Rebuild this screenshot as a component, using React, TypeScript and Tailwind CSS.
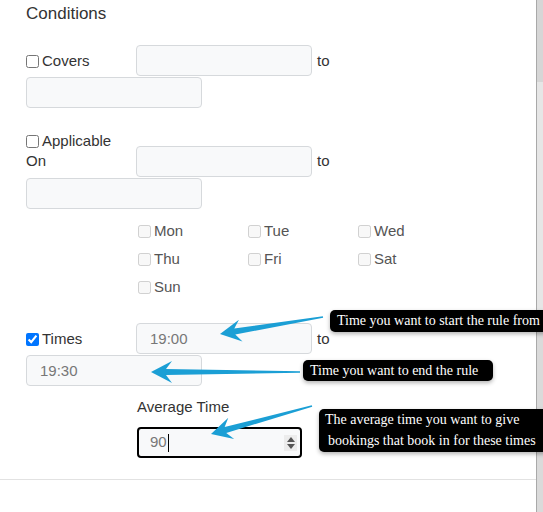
import React from "react";

const field =
  "h-[31px] rounded-[4px] border border-[#d6d9dc] bg-[#f8f9fa] px-[13px] text-[15px] text-[#777] outline-none";

type ArrowProps = { tip: [number, number]; tail: [number, number] };

// tapered annotation arrow, tip at local origin, tail along +x
function Arrow({ tip, tail }: ArrowProps) {
  const dx = tail[0] - tip[0];
  const dy = tail[1] - tip[1];
  const len = Math.sqrt(dx * dx + dy * dy);
  const angle = (Math.atan2(dy, dx) * 180) / Math.PI;
  const d = `M0 0 L21 -11 L15 -3 L${len} -0.8 L${len} 0.8 L15 3 L21 11 Z`;
  return (
    <g transform={`translate(${tip[0]} ${tip[1]}) rotate(${angle})`}>
      <path d={d} fill="#1b9fd5" />
    </g>
  );
}

function Day({ name }: { name: string }) {
  return (
    <label className="flex h-[28px] items-center gap-[3px] text-[#555]">
      <input type="checkbox" disabled className="m-0 h-[13px] w-[13px]" />
      {name}
    </label>
  );
}

export default function App() {
  return (
    <div
      className="relative flex h-[512px] w-[543px] overflow-hidden bg-white text-[15px] text-[#333]"
      style={{ fontFamily: '"Liberation Sans", Arial, sans-serif' }}
    >
      {/* Modal body */}
      <div className="w-[537px] shrink-0 border-r border-[#a9a9a9]">
        <div className="pl-[26px] pt-[2px]">
          <h2 className="text-[17px] leading-[24px] text-[#333]">Conditions</h2>

          {/* Covers */}
          <div className="mt-[19px] flex items-center">
            <label className="flex w-[110px] items-center gap-[3px] pt-[2px]">
              <input type="checkbox" className="m-0 h-[13px] w-[13px]" />
              Covers
            </label>
            <input readOnly className={`${field} w-[176px]`} />
            <span className="ml-[5px] pt-[2px]">to</span>
          </div>
          <input readOnly className={`${field} mt-[1px] block w-[176px]`} />

          {/* Applicable On */}
          <div className="mt-[23px] flex items-end">
            <div className="mb-[6px] w-[110px] leading-[20px]">
              <label className="flex items-center gap-[3px]">
                <input type="checkbox" className="m-0 h-[13px] w-[13px]" />
                Applicable
              </label>
              <div>On</div>
            </div>
            <input readOnly className={`${field} w-[176px]`} />
            <span className="mb-[6px] ml-[5px] leading-[20px]">to</span>
          </div>
          <input readOnly className={`${field} mt-[1px] block w-[176px]`} />

          <div className="ml-[112px] mt-[8px] grid grid-cols-[110px_110px_auto]">
            {["Mon", "Tue", "Wed", "Thu", "Fri", "Sat", "Sun"].map((d) => (
              <Day key={d} name={d} />
            ))}
          </div>

          {/* Times */}
          <div className="mt-[22px] flex items-center">
            <label className="flex w-[110px] items-center gap-[3px] pt-[2px]">
              <input type="checkbox" defaultChecked className="m-0 h-[13px] w-[13px]" />
              Times
            </label>
            <input readOnly value="19:00" className={`${field} w-[176px]`} />
            <span className="ml-[5px] pt-[2px]">to</span>
          </div>
          <input readOnly value="19:30" className={`${field} mt-[1px] block w-[176px]`} />

          <div className="ml-[111px] mt-[11px] leading-[20px]">Average Time</div>
          <div className="ml-[111px] mt-[10px] flex h-[31px] w-[165px] items-center rounded-[4px] border-2 border-black bg-[#f8f9fa] pl-[11px] pr-[3px] text-[#777]">
            <span>90</span>
            <span className="ml-px h-[18px] w-px bg-black" />
            <span className="ml-auto flex h-[16px] w-[13px] flex-col items-center justify-center gap-[2px] bg-[#ececec]">
              <svg width="8" height="5" viewBox="0 0 8 5">
                <path d="M4 0 L8 5 L0 5 Z" fill="#555" />
              </svg>
              <svg width="8" height="5" viewBox="0 0 8 5">
                <path d="M0 0 L8 0 L4 5 Z" fill="#555" />
              </svg>
            </span>
          </div>
        </div>
        <div className="mt-[21px] border-t border-[#e2e2e2]" />
      </div>

      {/* scrollbar track */}
      <div className="flex flex-1 flex-col">
        <div className="h-[82px] bg-[#d6d6d6]" />
        <div className="flex-1 bg-[#e6e6e6]" />
        <div className="h-[180px] bg-[#dadada]" />
      </div>

      {/* Annotations */}
      <svg className="pointer-events-none absolute inset-0 h-full w-full">
        <Arrow tip={[220, 334]} tail={[323, 317]} />
        <Arrow tip={[151, 372]} tail={[300, 372]} />
        <Arrow tip={[211, 434]} tail={[312, 406]} />
      </svg>

      <div
        className="absolute left-[330px] top-[310px] h-[22px] w-[230px] rounded-[5px] bg-black pl-[7px] text-[14px] leading-[22px] whitespace-nowrap text-white shadow-[0_2px_4px_rgba(0,0,0,0.3)]"
        style={{ fontFamily: '"Liberation Serif", "Times New Roman", serif' }}
      >
        Time you want to start the rule from
      </div>
      <div
        className="absolute left-[303px] top-[360px] h-[21px] w-[190px] rounded-[5px] bg-black pl-[7px] text-[14px] leading-[21px] whitespace-nowrap text-white shadow-[0_2px_4px_rgba(0,0,0,0.3)]"
        style={{ fontFamily: '"Liberation Serif", "Times New Roman", serif' }}
      >
        Time you want to end the rule
      </div>
      <div
        className="absolute left-[319px] top-[409px] h-[43px] w-[240px] rounded-[5px] bg-black pl-[6px] text-[14px] leading-[21px] whitespace-nowrap text-white shadow-[0_2px_4px_rgba(0,0,0,0.3)]"
        style={{ fontFamily: '"Liberation Serif", "Times New Roman", serif' }}
      >
        <div>The average time you want to give</div>
        <div className="pl-[3px]">bookings that book in for these times</div>
      </div>
    </div>
  );
}
